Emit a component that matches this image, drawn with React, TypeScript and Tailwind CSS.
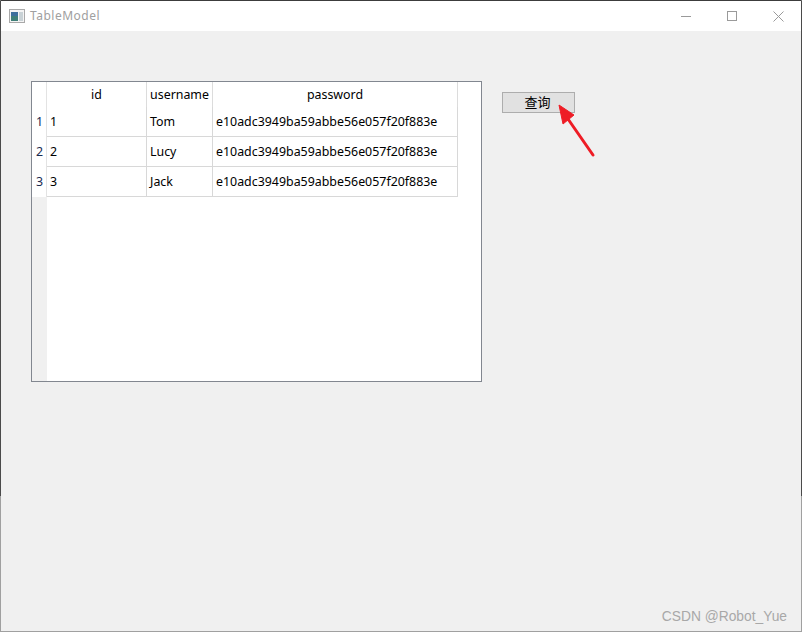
const rows = [
  { no: "1", id: "1", name: "Tom" },
  { no: "2", id: "2", name: "Lucy" },
  { no: "3", id: "3", name: "Jack" },
];

const hash = "e10adc3949ba59abbe56e057f20f883e";

const AppIcon = () => (
  <svg width="16" height="14" viewBox="0 0 16 14" className="shrink-0">
    <rect x="0.5" y="0.5" width="15" height="13" fill="#f4f4f4" stroke="#a9a9a9" />
    <rect x="2" y="3" width="7" height="9" fill="#3f7f78" />
    <rect x="2" y="3" width="7" height="4" fill="#3d6f9c" />
    <rect x="10" y="3" width="4" height="9" fill="#c9d2d6" />
  </svg>
);

const TitleBar = () => (
  <div className="h-[30px] shrink-0 bg-white flex items-center pl-[8px]">
    <AppIcon />
    <span className="ml-[5px] text-[12px] text-[#a0a0a0] tracking-[0.5px]">TableModel</span>
    <div className="ml-auto flex items-center">
      <div className="w-[46px] h-[30px] flex items-center justify-center">
        <div className="w-[10px] h-px bg-[#9a9a9a]" />
      </div>
      <div className="w-[46px] h-[30px] flex items-center justify-center">
        <div className="w-[10px] h-[10px] border border-[#9a9a9a]" />
      </div>
      <div className="w-[46px] h-[30px] flex items-center justify-center">
        <svg width="11" height="11" viewBox="0 0 11 11" stroke="#9a9a9a" fill="none">
          <path d="M0.5 0.5L10.5 10.5M10.5 0.5L0.5 10.5" />
        </svg>
      </div>
    </div>
  </div>
);

const DataTable = () => (
  <div className="w-[451px] h-[301px] border border-[#828790] bg-white flex shrink-0">
    {/* row numbers */}
    <div className="w-[15px] bg-[#f0f0f0] flex flex-col shrink-0">
      <div className="h-[25px] bg-white border-r border-[#e3e3e3]" />
      {rows.map((r) => (
        <div key={r.no} className="h-[30px] bg-white border-r border-[#e3e3e3] flex items-center justify-center text-[12.4px] text-[#1a2a50] pl-[1px] pt-[1px]">
          {r.no}
        </div>
      ))}
    </div>
    <div className="flex flex-col text-[12.4px] text-black">
      <div className="h-[25px] flex">
        <div className="w-[100px] border-r border-[#dcdcdc] flex items-center justify-center pt-[1px]">id</div>
        <div className="w-[66px] border-r border-[#dcdcdc] flex items-center justify-center pt-[1px]">username</div>
        <div className="w-[245px] border-r border-[#dcdcdc] flex items-center justify-center pt-[1px]">password</div>
      </div>
      {rows.map((r) => (
        <div key={r.id} className="h-[30px] flex">
          <div className="w-[100px] border-r border-b border-[#d8d8d8] pl-[3px] pt-[1px] flex items-center">{r.id}</div>
          <div className="w-[66px] border-r border-b border-[#d8d8d8] pl-[3px] pt-[1px] flex items-center">{r.name}</div>
          <div className="w-[245px] border-r border-b border-[#d8d8d8] pl-[3px] pt-[1px] flex items-center">{hash}</div>
        </div>
      ))}
    </div>
  </div>
);

export default function App() {
  return (
    <div className="relative w-[802px] h-[632px] bg-[#f0f0f0] border border-t-[#3c3c3c] border-l-[#a0a0a0] border-r-[#a0a0a0] border-b-[#a0a0a0] flex flex-col font-['Noto_Sans','Noto_Sans_CJK_SC',sans-serif]">
      <div className="absolute left-[-1px] top-0 w-px h-[495px] bg-[#4a4a4a]" />
      <div className="absolute right-[-1px] top-0 w-px h-[495px] bg-[#4a4a4a]" />
      <TitleBar />
      <div className="flex items-start pt-[50px] pl-[30px]">
        <DataTable />
        <button className="ml-[20px] mt-[11px] w-[73px] h-[21px] bg-[#e1e1e1] border border-[#adadad] text-[13px] text-black flex items-center justify-center pt-[1px] pr-[2px]">
          查询
        </button>
      </div>
      {/* red annotation arrow */}
      <svg className="absolute left-[549px] top-[94px]" width="50" height="65" viewBox="0 0 50 65" fill="none">
        <path d="M43 60L18 24" stroke="#ee1c25" strokeWidth="3" strokeLinecap="round" />
        <path d="M9 10L24 20L13 29Z" fill="#ee1c25" stroke="#ee1c25" strokeLinejoin="round" />
      </svg>
      <span className="absolute right-[14px] bottom-[3px] text-[13.8px] text-[#a8a8a8] font-['Liberation_Sans',sans-serif]">CSDN @Robot_Yue</span>
    </div>
  );
}
